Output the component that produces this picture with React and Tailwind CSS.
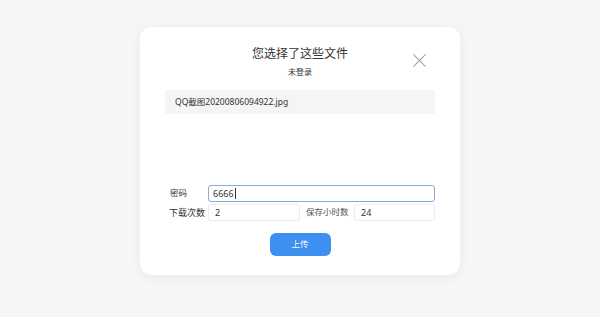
import React from "react";

const FONT = { fontFamily: '"Noto Sans", "Noto Sans CJK SC", sans-serif' };

function CloseIcon() {
  return (
    <svg viewBox="0 0 16 16" className="h-[15px] w-[15px] text-[#a0a0a0]" fill="none" stroke="currentColor" strokeWidth={1.1}>
      <path d="M1.5 1.5l13 13M14.5 1.5l-13 13" />
    </svg>
  );
}

export default function App() {
  return (
    <div className="flex h-[317px] w-[600px] justify-center bg-[#f6f6f6] pt-[27px] text-[#333]" style={FONT}>
      <div className="relative flex h-[248px] w-[320px] flex-col rounded-[12px] bg-white px-[25px] pt-[16px] shadow-[0_2px_12px_rgba(0,0,0,0.06)]">
        <button type="button" className="absolute right-[33px] top-[26px]" aria-label="关闭">
          <CloseIcon />
        </button>
        <div className="text-center text-[12px] leading-[22px] text-[#333]">您选择了这些文件</div>
        <div className="text-center text-[8px] leading-[14px] text-[#333]">未登录</div>
        <div className="mt-[11px] flex h-[24px] items-center bg-[#f5f5f5] px-[10px] text-[8.5px] text-[#333]">
          QQ截图20200806094922.jpg
        </div>
        <div className="mt-[71px] flex items-center">
          <span className="w-[43px] shrink-0 whitespace-nowrap pl-[5px] text-[8.5px]">密码</span>
          <div className="flex h-[17px] w-[228px] items-center rounded-[3px] border border-[#86acd8] px-[4px] text-[9px]">
            6666<span className="ml-[1px] h-[11px] w-px bg-[#333]" />
          </div>
        </div>
        <div className="mt-[2px] flex items-center">
          <span className="w-[43px] shrink-0 whitespace-nowrap pl-[4px] text-[9px]">下载次数</span>
          <div className="flex h-[17px] w-[92px] shrink-0 items-center rounded-[3px] border border-[#ececec] px-[6px] text-[9px]">2</div>
          <span className="w-[54px] shrink-0 whitespace-nowrap pl-[6px] text-[8.5px] text-[#555]">保存小时数</span>
          <div className="flex h-[17px] w-[81px] shrink-0 items-center rounded-[3px] border border-[#ececec] px-[6px] text-[9px]">24</div>
        </div>
        <div className="mt-[12px] flex justify-center">
          <button type="button" className="h-[23px] w-[61px] rounded-[6px] bg-[#3d8ff0] text-[8.5px] text-white">
            上传
          </button>
        </div>
      </div>
    </div>
  );
}
